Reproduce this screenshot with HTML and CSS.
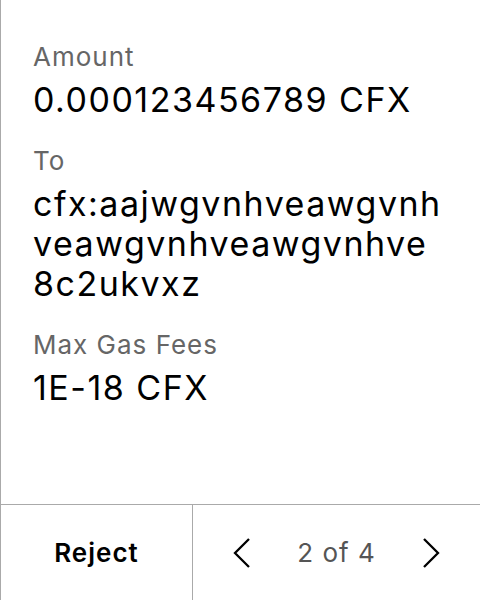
FILE: index.html
```html
<!DOCTYPE html>
<html>
<head>
<meta charset="utf-8">
<link rel="stylesheet" href="styles.css">
</head>
<body>
<div class="screen">
  <div class="content">
    <div class="field">
      <div class="label">Amount</div>
      <div class="value">0.000123456789 CFX</div>
    </div>
    <div class="field">
      <div class="label">To</div>
      <div class="value">cfx:aajwgvnhveawgvnh<br>veawgvnhveawgvnhve<br>8c2ukvxz</div>
    </div>
    <div class="field">
      <div class="label">Max Gas Fees</div>
      <div class="value">1E-18 CFX</div>
    </div>
  </div>
  <div class="footer">
    <div class="reject">Reject</div>
    <div class="pager">
      <svg class="chev" width="20" height="36" viewBox="0 0 20 36"><path d="M17 4 L3 18 L17 32" fill="none" stroke="#000" stroke-width="2.3"/></svg>
      <span class="count">2 of 4</span>
      <svg class="chev" width="20" height="36" viewBox="0 0 20 36"><path d="M3 4 L17 18 L3 32" fill="none" stroke="#000" stroke-width="2.3"/></svg>
    </div>
  </div>
</div>
</body>
</html>
```
FILE: styles.css
```css
html, body {
  margin: 0;
  padding: 0;
  background: #fff;
}
body {
  font-family: Inter, "Noto Sans", sans-serif;
  color: #000;
}
.screen {
  width: 479px;
  height: 600px;
  border-left: 1px solid #aaa;
  display: flex;
  flex-direction: column;
}
.content {
  flex: 1;
  padding: 41px 0 0 32px;
  display: flex;
  flex-direction: column;
  gap: 25px;
}
.label {
  font-size: 26px;
  line-height: 32px;
  letter-spacing: 1px;
  color: #666;
  margin-bottom: 7px;
}
.value {
  font-size: 34px;
  line-height: 40px;
  letter-spacing: 1.5px;
  color: #000;
}
.footer {
  height: 95px;
  border-top: 1px solid #aaa;
  display: flex;
}
.reject {
  width: 191px;
  border-right: 1px solid #aaa;
  display: flex;
  align-items: center;
  justify-content: center;
  font-size: 26px;
  font-weight: 600;
  letter-spacing: 1px;
}
.pager {
  flex: 1;
  display: flex;
  align-items: center;
  justify-content: center;
  gap: 45px;
}
.count {
  font-size: 26px;
  letter-spacing: 1px;
  color: #555;
}
.chev {
  display: block;
}
```
